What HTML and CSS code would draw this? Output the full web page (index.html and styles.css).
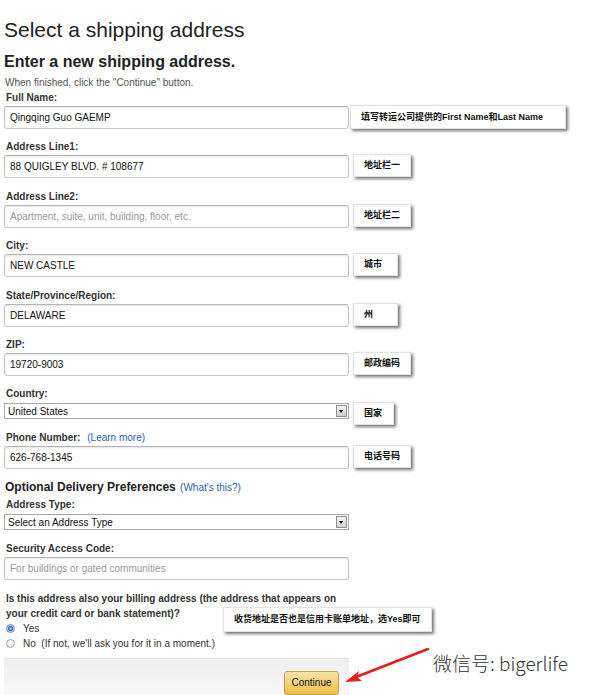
FILE: index.html
```html
<!DOCTYPE html>
<html lang="en">
<head>
    <meta charset="UTF-8">
    <title>Select a shipping address</title>
    <link rel="stylesheet" href="styles.css">
</head>
<body>
    <div class="page">
        <h1 class="title">Select a shipping address</h1>
        <h2 class="subtitle">Enter a new shipping address.</h2>
        <p class="hint">When finished, click the "Continue" button.</p>

        <form class="form">
            <!-- Full Name -->
            <div class="field">
                <label class="label">Full Name:</label>
                <div class="row">
                    <input class="text-input" type="text" value="Qingqing Guo GAEMP">
                    <span class="callout callout-wide">填写转运公司提供的First Name和Last Name</span>
                </div>
            </div>

            <div class="field">
                <label class="label">Address Line1:</label>
                <div class="row">
                    <input class="text-input" type="text" value="88 QUIGLEY BLVD. # 108677">
                    <span class="callout">地址栏一</span>
                </div>
            </div>

            <div class="field">
                <label class="label">Address Line2:</label>
                <div class="row">
                    <input class="text-input" type="text" placeholder="Apartment, suite, unit, building, floor, etc.">
                    <span class="callout">地址栏二</span>
                </div>
            </div>

            <div class="field">
                <label class="label">City:</label>
                <div class="row">
                    <input class="text-input" type="text" value="NEW CASTLE">
                    <span class="callout">城市</span>
                </div>
            </div>

            <div class="field">
                <label class="label">State/Province/Region:</label>
                <div class="row">
                    <input class="text-input" type="text" value="DELAWARE">
                    <span class="callout">州</span>
                </div>
            </div>

            <div class="field">
                <label class="label">ZIP:</label>
                <div class="row">
                    <input class="text-input" type="text" value="19720-9003">
                    <span class="callout">邮政编码</span>
                </div>
            </div>

            <div class="field field-select">
                <label class="label">Country:</label>
                <div class="row">
                    <div class="select">
                        <span class="select-text">United States</span>
                        <span class="select-arrow"></span>
                    </div>
                    <span class="callout callout-country">国家</span>
                </div>
            </div>

            <div class="field">
                <label class="label">Phone Number: <a href="#" class="link">(Learn more)</a></label>
                <div class="row">
                    <input class="text-input" type="text" value="626-768-1345">
                    <span class="callout">电话号码</span>
                </div>
            </div>

            <!-- Optional Delivery Preferences -->
            <h3 class="section-title">Optional Delivery Preferences <a href="#" class="link">(What's this?)</a></h3>

            <div class="field field-select field-first">
                <label class="label">Address Type:</label>
                <div class="select">
                    <span class="select-text">Select an Address Type</span>
                    <span class="select-arrow"></span>
                </div>
            </div>

            <div class="field">
                <label class="label">Security Access Code:</label>
                <input class="text-input" type="text" placeholder="For buildings or gated communities">
            </div>

            <!-- Billing question -->
            <div class="billing">
                <p class="question">Is this address also your billing address (the address that appears on your credit card or bank statement)?</p>
                <label class="radio-row">
                    <input class="radio" type="radio" name="billing" checked>
                    <span>Yes</span>
                </label>
                <label class="radio-row">
                    <input class="radio" type="radio" name="billing">
                    <span>No&nbsp; (If not, we'll ask you for it in a moment.)</span>
                </label>
                <span class="callout callout-billing">收货地址是否也是信用卡账单地址，选Yes即可</span>
            </div>

            <div class="actions">
                <button type="button" class="continue-button">Continue</button>
                <svg class="arrow" width="100" height="45" viewBox="0 0 100 45">
                    <line x1="90" y1="3" x2="18" y2="31" stroke="#e3201b" stroke-width="2.6" stroke-linecap="round"/>
                    <polygon points="7,36 21,25 19,31 24,35" fill="#e3201b"/>
                </svg>
                <span class="watermark">微信号: bigerlife</span>
            </div>
        </form>
    </div>
</body>
</html>
```

FILE: styles.css
```css
body {
    margin: 0;
    font-family: "Liberation Sans", Arial, "Noto Sans CJK SC", sans-serif;
    color: #333;
    background-color: #fff;
    overflow: hidden;
}

.page {
    position: relative;
    padding: 18px 0 0 4px;
}

/* Headings */
.title {
    margin: 0;
    font-size: 21px;
    line-height: 24px;
    font-weight: normal;
    color: #222;
}

.subtitle {
    margin: 9.5px 0 0;
    font-size: 16px;
    line-height: 20px;
    font-weight: bold;
    color: #222;
}

.hint {
    margin: 4.5px 0 0 1px;
    font-size: 10px;
    line-height: 13px;
    color: #555;
}

.form {
    margin-top: 2px;
}

/* Fields */
.field {
    margin-bottom: 11.4px;
}

.field-first {
    margin-top: 3px;
}

.label {
    display: block;
    padding-left: 2px;
    margin-bottom: 2px;
    font-size: 10px;
    line-height: 13px;
    font-weight: bold;
    color: #333;
}

.field-select .label {
    margin-bottom: 3px;
}

.field-select .row {
    height: 16px;
}

.label .link {
    margin-left: 4px;
    font-weight: normal;
}

.link {
    color: #2a64b0;
    text-decoration: none;
    font-weight: normal;
    font-size: 10px;
}

.row {
    display: flex;
    align-items: flex-start;
}

.text-input {
    flex: none;
    display: block;
    width: 345px;
    height: 23px;
    box-sizing: border-box;
    margin: 0;
    padding: 0 5px;
    border: 1px solid #c9c9c9;
    border-top-color: #b5b5b5;
    border-radius: 3px;
    box-shadow: inset 0 1px 2px rgba(0, 0, 0, 0.1);
    font-family: "Liberation Sans", Arial, sans-serif;
    font-size: 10px;
    color: #111;
    background-color: #fff;
}

.text-input::placeholder {
    color: #999;
}

/* Fake select box */
.select {
    flex: none;
    display: flex;
    align-items: center;
    justify-content: space-between;
    width: 345px;
    height: 16px;
    box-sizing: border-box;
    border: 1px solid #a9a9a9;
    background-color: #fff;
    padding: 0 1px 0 3px;
    font-size: 10px;
    color: #111;
}

.select-arrow {
    position: relative;
    width: 11px;
    height: 12px;
    box-sizing: border-box;
    border: 1px solid #8f8f8f;
    background: linear-gradient(#f6f6f6, #cfcfcf);
}

.select-arrow::after {
    content: "";
    position: absolute;
    left: 2px;
    top: 4px;
    border-left: 2.5px solid transparent;
    border-right: 2.5px solid transparent;
    border-top: 3px solid #111;
}

/* Annotation callouts */
.callout {
    flex: none;
    display: inline-block;
    box-sizing: border-box;
    min-width: 45px;
    height: 23px;
    margin: -1px 0 0 4px;
    padding: 0 10px;
    border: 1px solid #e2e2e2;
    background-color: #fff;
    box-shadow: 2px 2px 3px rgba(0, 0, 0, 0.55);
    font-family: "Liberation Sans", "Noto Sans CJK SC", sans-serif;
    font-size: 9px;
    font-weight: bold;
    line-height: 21px;
    color: #111;
    white-space: nowrap;
}

.callout-wide {
    height: 24px;
    line-height: 22px;
    margin-left: 1px;
    padding-right: 22px;
}

.callout-country {
    min-width: 41px;
    margin-top: -1px;
}

.callout-billing {
    position: absolute;
    left: 219px;
    top: 16px;
    height: 25px;
    line-height: 23px;
    margin: 0;
}

/* Section */
.section-title {
    margin: 0;
    padding-left: 1px;
    font-size: 12px;
    line-height: 15px;
    font-weight: bold;
    color: #222;
}

.section-title .link {
    margin-left: 1px;
}

/* Billing question */
.billing {
    position: relative;
    width: 345px;
}

.question {
    margin: 0;
    padding-left: 2px;
    font-size: 10px;
    line-height: 15px;
    font-weight: bold;
    color: #333;
}

.radio-row {
    display: flex;
    align-items: center;
    height: 15px;
    font-size: 10px;
    color: #333;
}

.radio {
    appearance: none;
    -webkit-appearance: none;
    width: 9px;
    height: 9px;
    margin: 0 8.5px 0 1.5px;
    border: 1px solid #a4a4a4;
    border-radius: 50%;
    background: radial-gradient(circle at 40% 35%, #fff, #dcdcdc);
    box-sizing: border-box;
}

.radio:checked {
    border-color: #6f8fb3;
    background: radial-gradient(circle, #b8d6f5 0, #2e68b5 2.2px, #9ab3cf 2.6px, #eef3f8 4px);
}

/* Bottom bar */
.actions {
    position: relative;
    display: flex;
    justify-content: flex-end;
    align-items: flex-start;
    width: 345px;
    height: 38px;
    box-sizing: border-box;
    margin-top: 7px;
    padding: 12px 10px 0 0;
    border-top: 1px solid #e4e4e4;
    background: linear-gradient(#eeeeee, #f9f9f9);
}

.continue-button {
    width: 55px;
    height: 24px;
    padding: 0;
    border: 1px solid #c8a24a;
    border-radius: 3px;
    background: linear-gradient(#f9e4aa, #efbf47);
    font-family: "Liberation Sans", Arial, sans-serif;
    font-size: 10px;
    color: #111;
    cursor: pointer;
}

.arrow {
    position: absolute;
    left: 334px;
    top: -13px;
}

.watermark {
    position: absolute;
    left: 429px;
    top: -9px;
    font-family: "Noto Sans CJK SC", sans-serif;
    font-size: 19px;
    font-weight: 300;
    line-height: 26px;
    color: #333;
    white-space: nowrap;
}
```
